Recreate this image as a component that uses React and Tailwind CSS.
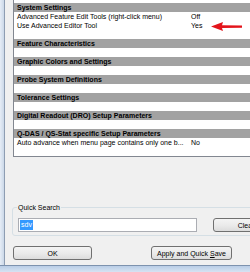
const sections = [
  {
    title: 'System Settings',
    rows: [
      ['Advanced Feature Edit Tools (right-click menu)', 'Off'],
      ['Use Advanced Editor Tool', 'Yes'],
    ],
  },
  { title: 'Feature Characteristics', rows: [] },
  { title: 'Graphic Colors and Settings', rows: [] },
  { title: 'Probe System Definitions', rows: [] },
  { title: 'Tolerance Settings', rows: [] },
  { title: 'Digital Readout (DRO) Setup Parameters', rows: [] },
  {
    title: 'Q-DAS / QS-Stat specific Setup Parameters',
    rows: [['Auto advance when menu page contains only one b...', 'No']],
  },
];

const btn =
  'h-[14px] border border-[#707070] rounded-[3px] bg-linear-to-b from-[#f4f4f4] via-[#ebebeb] to-[#dcdcdc] flex items-center justify-center leading-none shrink-0 whitespace-pre';

export default function App() {
  return (
    <div className="w-[250px] h-[272px] overflow-hidden flex flex-col bg-[#f0f0f0] font-[Liberation_Sans,Arial,sans-serif] text-[7px] text-black">
      <div className="flex flex-1 min-h-0">
        {/* window frame */}
        <div className="w-[5px] shrink-0 border-r border-[#8e9db2] bg-linear-to-r from-[#e6edf6] to-[#cbd8e8]" />

        <div className="flex-1 flex flex-col pl-[8px]">
          {/* settings list */}
          <div className="relative w-[300px] bg-white border-l border-b border-[#828790] pt-[3px]">
            {sections.map((s) => (
              <div key={s.title}>
                <div className="h-[9px] leading-[9px] bg-[#a2a2a2] font-bold pl-[3px] whitespace-nowrap">
                  {s.title}
                </div>
                {s.rows.map(([name, value]) => (
                  <div key={name} className="h-[9px] leading-[9px] flex whitespace-nowrap">
                    <span className="w-[177px] pl-[3px] overflow-hidden">{name}</span>
                    <span>{value}</span>
                  </div>
                ))}
                <div className="h-[9px]" />
              </div>
            ))}

            <svg className="absolute left-[197px] top-[22px]" width="32" height="9" viewBox="0 0 32 9">
              <polygon points="0,4.5 12,0 11,3.2 31,3.4 31,5.8 11,6 12,9" fill="#e3141b" />
            </svg>
          </div>

          {/* quick search group */}
          <div className="relative mt-[50px] ml-[-1px] w-[260px] h-[29px] border border-[#d5dfe5] rounded-[3px]">
            <span className="absolute left-[4px] top-[-5px] px-[1px] leading-[9px] bg-[#f0f0f0]">
              Quick Search
            </span>
            <div className="flex items-start pt-[10px] pl-[5px]">
              <div className="w-[179px] h-[14px] border border-[#abadb3] bg-white flex items-center pl-[1px] shrink-0">
                <span className="bg-[#3399ff] text-white px-[1px] leading-[10px]">sdv</span>
              </div>
              <div className={`${btn} ml-[16px] w-[66px]`}>Clear</div>
            </div>
          </div>

          {/* buttons */}
          <div className="flex mt-[10px]">
            <div className={`${btn} w-[79px]`}>OK</div>
            <div className={`${btn} ml-[59px] w-[81px]`}>
              {'Apply and Quick '}
              <span className="underline">S</span>
              {'ave'}
            </div>
          </div>
        </div>
      </div>

      {/* bottom frame */}
      <div className="h-[7px] shrink-0 border-t border-[#7d92ae] bg-linear-to-b from-[#b9cde6] to-[#d6e3f2]" />
    </div>
  );
}
